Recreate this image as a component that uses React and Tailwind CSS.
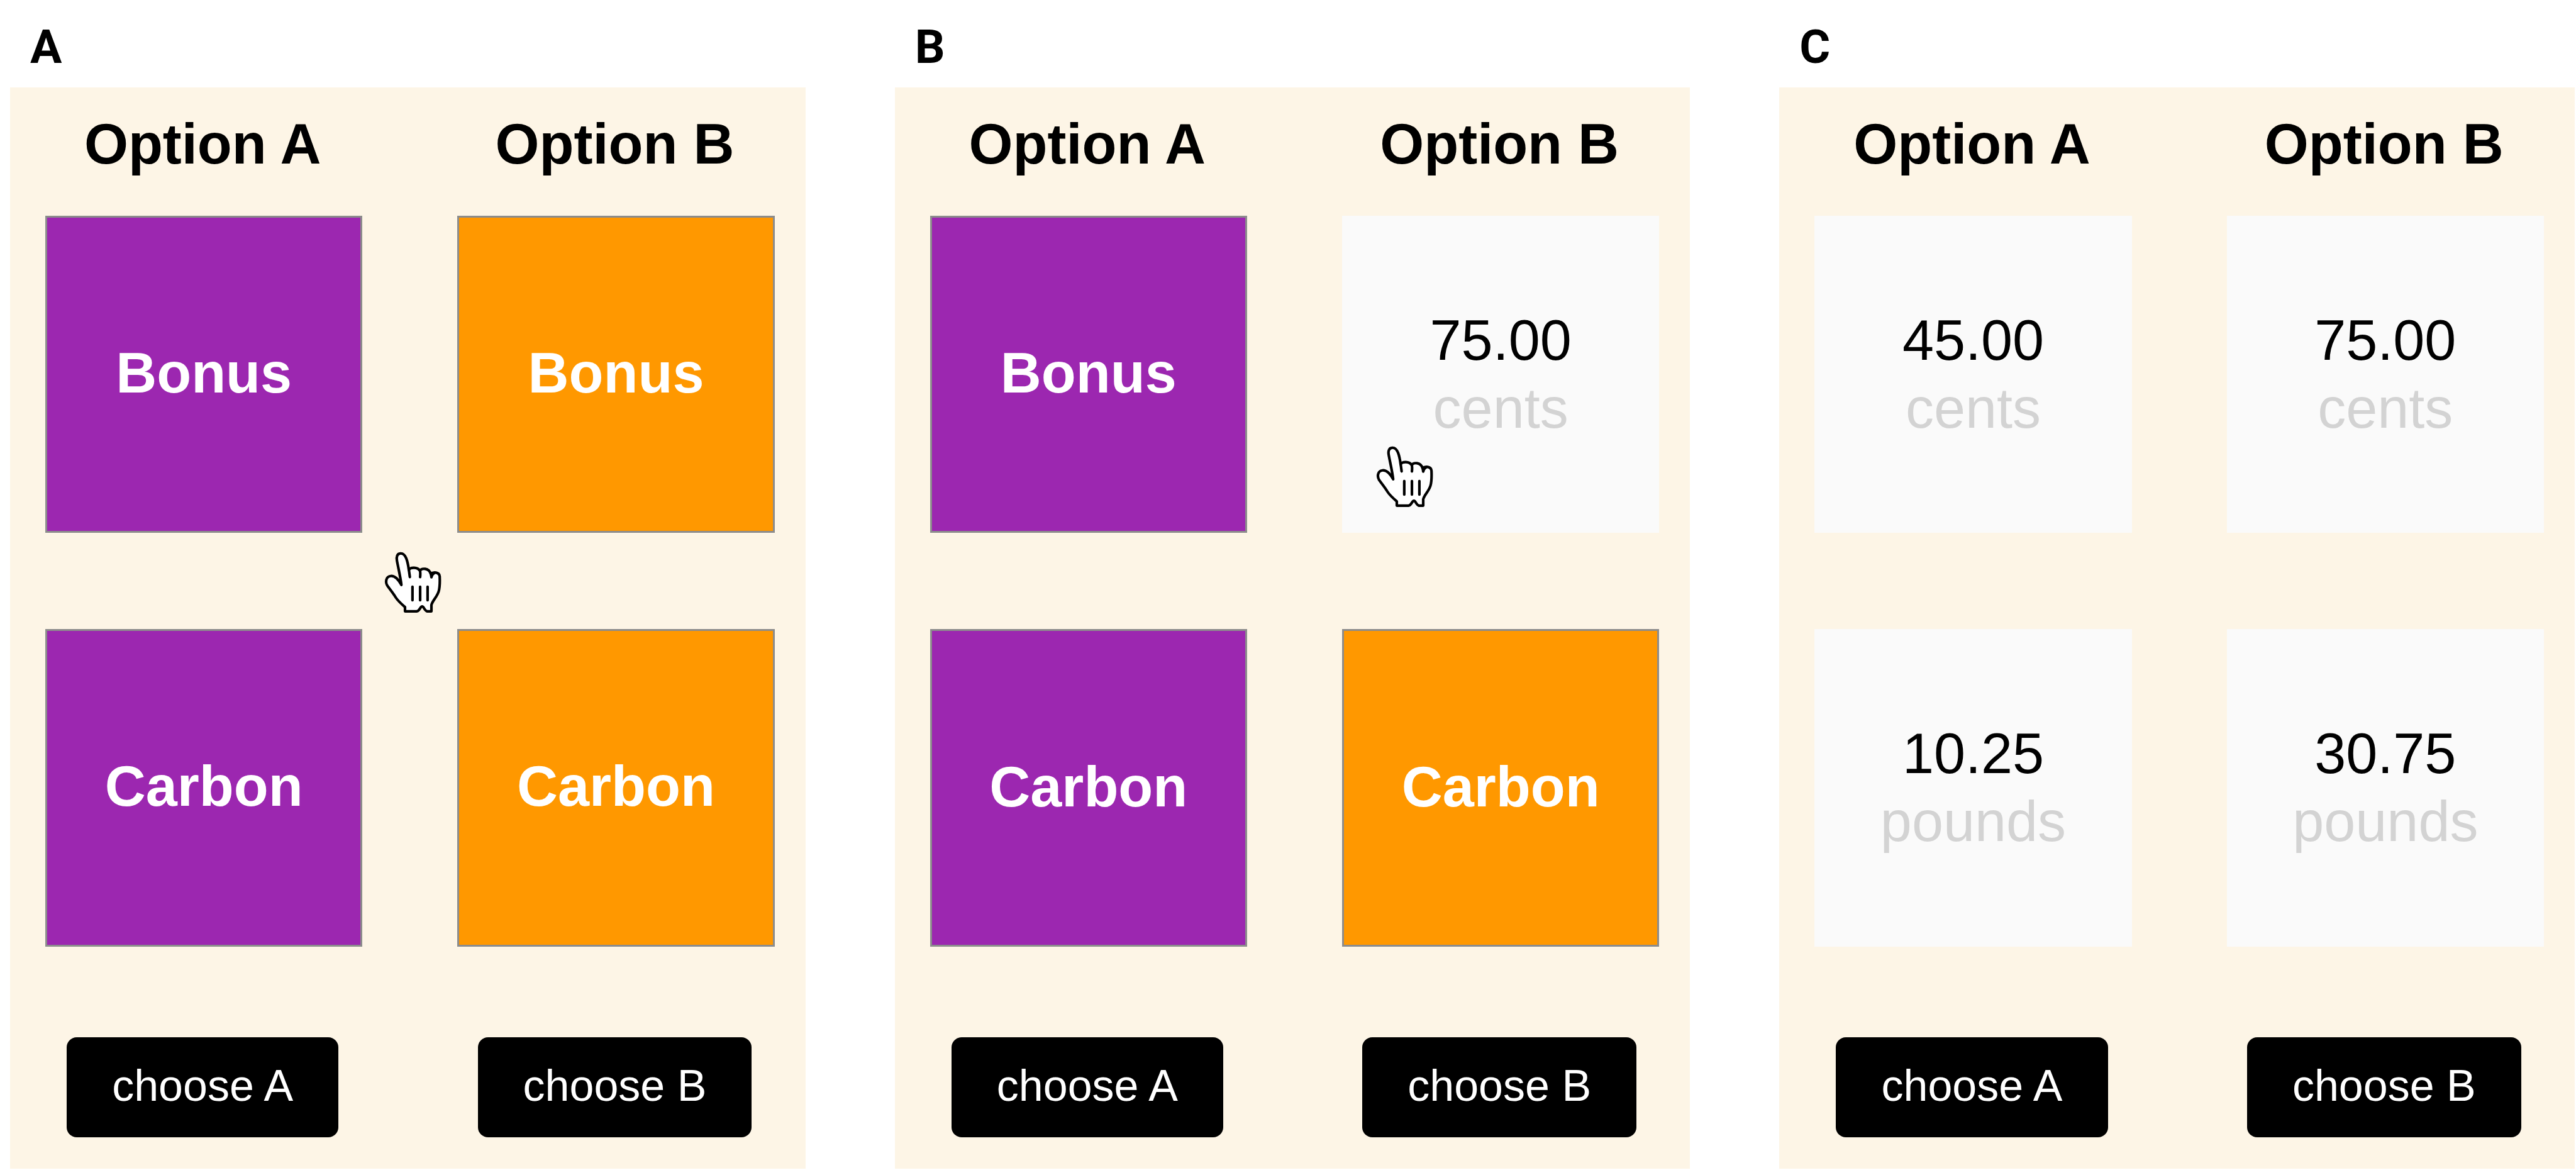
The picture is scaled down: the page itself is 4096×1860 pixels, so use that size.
function HandCursor({ className }) {
  return (
    <svg
      viewBox="100 205 290 310"
      aria-hidden="true"
      className={`pointer-events-none absolute z-10 h-[100px] w-[93px] ${className}`}
      fill="none"
      stroke="#000"
      strokeWidth="13"
      strokeLinecap="round"
      strokeLinejoin="round"
    >
      <path
        fill="#fff"
        d="M188 372 C184 335 173 290 166 252 C162 232 168 217 182 216 C198 214 206 226 212 240 C219 258 222 275 225 298 C232 284 268 282 280 302 C288 288 324 286 334 318 C346 306 376 308 378 330 C379 352 379 375 375 396 C370 428 342 448 337 472 L337 503 L316 503 C302 500 300 479 291 479 C281 479 281 498 265 503 L206 503 L206 482 C190 468 170 450 160 434 C148 414 134 397 120 378 C106 358 112 330 135 328 C158 326 176 350 188 372 Z"
      />
      <path d="M225 296 L230 333 M280 300 C283 310 282 322 281 333 M333 312 C336 322 336 328 337 334 C339 322 343 317 350 314" />
      <path d="M243 381 V448 M281 381 V448 M318 381 V448" />
    </svg>
  );
}

const hidden = {
  A: "border-3 border-[#8c8c8c] bg-[#9c27b0] text-white",
  B: "border-3 border-[#8c8c8c] bg-[#ff9800] text-white",
};

function Tile({ option, label, value, unit, children }) {
  return (
    <div className="relative">
      <button
        type="button"
        className={`flex aspect-square w-full flex-col items-center justify-center text-[90px] leading-[108px] ${
          value ? "bg-[#fafafa]" : hidden[option]
        }`}
      >
        {value ? (
          <>
            <span className="text-black">{value}</span>
            <span className="text-[#d3d3d3]">{unit}</span>
          </>
        ) : (
          <span className="pb-1 font-bold">{label}</span>
        )}
      </button>
      {children}
    </div>
  );
}

function ChooseButton({ option }) {
  return (
    <div className="flex justify-center pr-1">
      <button
        type="button"
        className="rounded-2xl bg-black px-[72px] pt-[36px] pb-[41px] text-[70px] leading-[82px] whitespace-nowrap text-white"
      >
        choose {option}
      </button>
    </div>
  );
}

function OptionHeading({ option }) {
  return (
    <h3 className="pr-1 text-center text-[90px] leading-[104px] font-bold whitespace-nowrap">
      Option {option}
    </h3>
  );
}

function Panel({ name, tiles }) {
  return (
    <section aria-label={`Panel ${name}`}>
      <h2 className="h-[139px] pt-[10px] pl-[32px] font-[Roboto,sans-serif] text-[75px] leading-[129px] font-bold">
        {name}
      </h2>
      <div className="bg-[#fdf5e6] pt-[38px] pr-[49px] pb-[50px] pl-[56px]">
        <div className="grid grid-cols-2 gap-x-[151px]">
          <OptionHeading option="A" />
          <OptionHeading option="B" />
        </div>
        <div className="mt-[62px] grid grid-cols-2 gap-x-[151px] gap-y-[153px]">
          {tiles.map((tile, i) => (
            <Tile key={i} {...tile}>
              {tile.cursor && <HandCursor className={tile.cursor} />}
            </Tile>
          ))}
        </div>
        <div className="mt-[144px] grid grid-cols-2 gap-x-[151px]">
          <ChooseButton option="A" />
          <ChooseButton option="B" />
        </div>
      </div>
    </section>
  );
}

const panels = [
  {
    name: "A",
    tiles: [
      { option: "A", label: "Bonus", cursor: "top-[calc(100%+29px)] left-[calc(100%+34px)]" },
      { option: "B", label: "Bonus" },
      { option: "A", label: "Carbon" },
      { option: "B", label: "Carbon" },
    ],
  },
  {
    name: "B",
    tiles: [
      { option: "A", label: "Bonus" },
      { option: "B", value: "75.00", unit: "cents", cursor: "top-[365px] left-[53px]" },
      { option: "A", label: "Carbon" },
      { option: "B", label: "Carbon" },
    ],
  },
  {
    name: "C",
    tiles: [
      { option: "A", value: "45.00", unit: "cents" },
      { option: "B", value: "75.00", unit: "cents" },
      { option: "A", value: "10.25", unit: "pounds" },
      { option: "B", value: "30.75", unit: "pounds" },
    ],
  },
];

export default function App() {
  return (
    <main className="grid min-h-screen grid-cols-3 gap-x-[142px] bg-white pr-[2px] pl-[16px] font-['Liberation_Sans',Arial,sans-serif] text-black">
      {panels.map((panel) => (
        <Panel key={panel.name} {...panel} />
      ))}
    </main>
  );
}
